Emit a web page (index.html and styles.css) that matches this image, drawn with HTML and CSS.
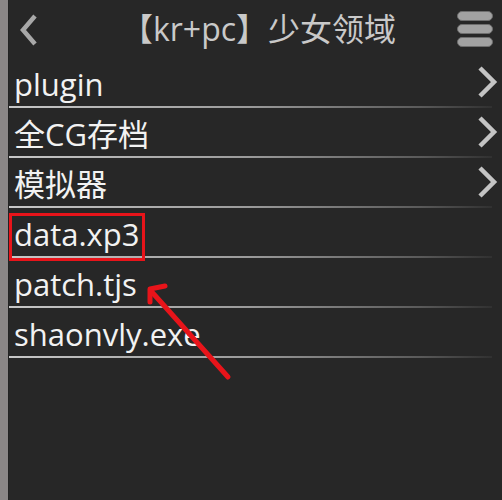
FILE: index.html
```html
<!DOCTYPE html>
<html>
<head>
<meta charset="utf-8">
<link rel="stylesheet" href="styles.css">
</head>
<body>
<div class="screen">
  <div class="strip"></div>
  <div class="main">
    <div class="header">
      <div class="back">
        <svg width="24" height="34" viewBox="0 0 24 34"><path d="M17 3 L5 17 L17 31" fill="none" stroke="#a8a8a8" stroke-width="4.5" stroke-linecap="butt"/></svg>
      </div>
      <div class="title">【kr+pc】少女领域</div>
      <div class="menu">
        <span class="bar"></span><span class="bar"></span><span class="bar"></span>
      </div>
    </div>
    <div class="list">
      <div class="row"><span class="name">plugin</span><svg class="chev" width="24" height="32" viewBox="0 0 24 32"><path d="M4 2 L18 16 L4 30" fill="none" stroke="#c4c4c4" stroke-width="4.5"/></svg></div>
      <div class="row"><span class="name">全CG存档</span><svg class="chev" width="24" height="32" viewBox="0 0 24 32"><path d="M4 2 L18 16 L4 30" fill="none" stroke="#c4c4c4" stroke-width="4.5"/></svg></div>
      <div class="row"><span class="name">模拟器</span><svg class="chev" width="24" height="32" viewBox="0 0 24 32"><path d="M4 2 L18 16 L4 30" fill="none" stroke="#c4c4c4" stroke-width="4.5"/></svg></div>
      <div class="row"><span class="name">data.xp3</span><span class="mark"></span></div>
      <div class="row"><span class="name">patch.tjs</span></div>
      <div class="row"><span class="name">shaonvly.exe</span></div>
    </div>
  </div>
  <svg class="arrow" width="502" height="500" viewBox="0 0 502 500">
    <path d="M228 377 L151 291" fill="none" stroke="#e8141a" stroke-width="5" stroke-linecap="round"/>
    <path d="M165 286 L150 289 L150 302" fill="none" stroke="#e8141a" stroke-width="5" stroke-linecap="round" stroke-linejoin="round"/>
  </svg>
</div>
</body>
</html>
```
FILE: styles.css
```css
html, body {
  margin: 0;
  padding: 0;
  background: #272727;
}
.screen {
  position: relative;
  width: 502px;
  height: 500px;
  display: flex;
  overflow: hidden;
  font-family: "Open Sans", "Noto Sans CJK SC", sans-serif;
}
.strip {
  width: 8px;
  background: #8a8686;
  border-right: 1px solid #222;
  flex: none;
}
.main {
  flex: 1;
  display: flex;
  flex-direction: column;
}
.header {
  height: 58px;
  display: flex;
  align-items: center;
}
.back {
  width: 40px;
  padding-left: 9px;
  display: flex;
  align-items: center;
  margin-top: 1px;
}
.title {
  flex: 1;
  text-align: center;
  color: #c9c9c9;
  font-size: 32px;
  padding-left: 2px;
  margin-top: -4px;
  white-space: nowrap;
}
.menu {
  width: 36px;
  margin-right: 9px;
  display: flex;
  flex-direction: column;
  gap: 3px;
  margin-top: -1px;
}
.bar {
  display: block;
  height: 8px;
  border-radius: 5px;
  background: #a2a2a2;
  border: 1px solid #6e6e6e;
}
.list {
  display: flex;
  flex-direction: column;
}
.row {
  position: relative;
  height: 48px;
  display: flex;
  align-items: center;
  justify-content: space-between;
  border-bottom: 2px solid transparent;
  border-image: linear-gradient(to right, #c8c8c8 0%, #9a9a9a 50%, #5a5a5a 85%, #303030 100%) 1;
  margin-right: 10px;
}
.name {
  color: #f2f2f2;
  font-size: 31px;
  line-height: 48px;
  padding-left: 5px;
  margin-top: 4px;
}
.chev {
  margin-right: -8px;
  margin-top: -1px;
}
.mark {
  position: absolute;
  left: 0;
  top: 5px;
  width: 130px;
  height: 42px;
  border: 3px solid #e8141a;
}
.arrow {
  position: absolute;
  left: 0;
  top: 0;
  pointer-events: none;
}
```
